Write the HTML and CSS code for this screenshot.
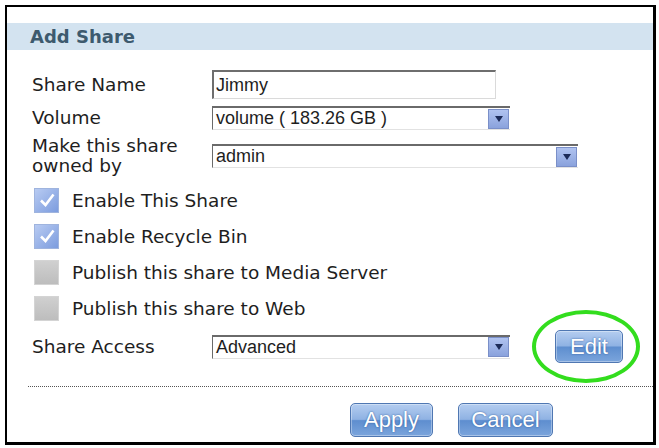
FILE: index.html
```html
<!DOCTYPE html>
<html>
<head lang="en">
    <meta charset="UTF-8">
    <title>Add Share</title>
    <link rel="stylesheet" href="styles.css">
</head>
<body>
<div class="frame">
    <div class="titlebar">Add Share</div>
    <div class="form">
        <div class="row r-name">
            <label class="lbl">Share Name</label>
            <div class="textbox">Jimmy</div>
        </div>
        <div class="row r-vol">
            <label class="lbl">Volume</label>
            <div class="combo w-mid"><span class="val">volume ( 183.26 GB )</span><span class="arrow"></span></div>
        </div>
        <div class="row r-owner">
            <label class="lbl lbl-2">Make this share<br>owned by</label>
            <div class="combo w-long"><span class="val">admin</span><span class="arrow"></span></div>
        </div>
        <div class="checks">
            <div class="check-row"><span class="box on"><svg width="20" height="20" viewBox="0 0 20 20"><path d="M4 10.5 L8.5 15 L16.5 4.5" fill="none" stroke="#fff" stroke-width="2.6"/></svg></span>Enable This Share</div>
            <div class="check-row"><span class="box on"><svg width="20" height="20" viewBox="0 0 20 20"><path d="M4 10.5 L8.5 15 L16.5 4.5" fill="none" stroke="#fff" stroke-width="2.6"/></svg></span>Enable Recycle Bin</div>
            <div class="check-row"><span class="box"></span>Publish this share to Media Server</div>
            <div class="check-row"><span class="box"></span>Publish this share to Web</div>
        </div>
        <div class="row r-access">
            <label class="lbl">Share Access</label>
            <div class="combo w-mid"><span class="val">Advanced</span><span class="arrow"></span></div>
            <div class="edit-wrap">
                <button class="btn btn-edit">Edit</button>
                <span class="mark"></span>
            </div>
        </div>
    </div>
    <div class="divider"></div>
    <div class="actions">
        <button class="btn btn-apply">Apply</button>
        <button class="btn btn-cancel">Cancel</button>
    </div>
</div>
</body>
</html>
```
FILE: styles.css
```css
*{margin:0;padding:0;box-sizing:border-box;}
body{background:#fff;font-family:"DejaVu Sans",Verdana,sans-serif;color:#1e1e1e;}
.frame{margin:5px 0 0 5px;width:651px;height:440px;border:2px solid #000;border-right-width:3px;border-bottom-width:3px;background:#fff;}
.titlebar{margin-top:16px;height:27px;line-height:27px;padding-left:23px;background:#d3e3f0;color:#3d5a6e;font-weight:bold;font-size:18px;}
.form{padding-left:25px;margin-top:20px;}
.row{display:flex;align-items:center;}
.lbl{display:block;width:180px;flex:none;font-size:18.5px;line-height:20px;}
.r-name{height:29px;}
.r-vol{height:24px;margin-top:7px;}
.r-owner{height:40px;margin-top:6px;}
.r-access{height:33px;margin-top:4px;}
.textbox{width:284px;height:29px;border-top:2px solid #6e6e6e;border-left:2px solid #6e6e6e;border-right:1px solid #dadada;border-bottom:1px solid #dadada;font-family:"Liberation Sans",Arial,sans-serif;font-size:18px;line-height:26px;padding-left:2px;}
.combo{display:flex;align-items:center;height:24px;border-top:2px solid #6a6a6a;border-left:1px solid #6a6a6a;border-bottom:1px solid #e2e2e2;font-family:"Liberation Sans",Arial,sans-serif;font-size:18px;}
.combo .val{flex:1;padding-left:3px;line-height:21px;}
.w-mid{width:298px;}
.w-long{width:366px;}
.arrow{flex:none;width:21px;height:20px;margin-right:1px;background:linear-gradient(#b0c3f0,#8aa2dc);border:1px solid #7a8fc8;display:flex;align-items:center;justify-content:center;}
.arrow:after{content:"";border-left:4px solid transparent;border-right:4px solid transparent;border-top:6px solid #1c2b58;}
.checks{margin-top:6px;}
.check-row{height:36px;display:flex;align-items:center;font-size:18.5px;padding-left:2px;}
.box{width:25px;height:25px;margin-right:13px;border:1px solid #d4d4d4;background:linear-gradient(#d0d0d0,#bdbdbd);display:flex;align-items:center;justify-content:center;}
.box.on{border-color:#9fb4de;background:linear-gradient(135deg,#b8cbf2,#7c9cde);}
.edit-wrap{position:relative;margin-left:45px;}
.btn{display:block;height:34px;border:1px solid #4f77b2;border-radius:5px;background:linear-gradient(#b4cdf0,#8fb2e3 48%,#5e8ecf 52%,#7ba5dc);color:#fff;font-family:"Liberation Sans",Arial,sans-serif;font-size:22px;text-shadow:0 0 2px #2d5a9c;box-shadow:inset 0 0 0 1px rgba(255,255,255,.35);}
.btn-edit{width:68px;height:33px;}
.mark{position:absolute;left:-23px;top:-20px;width:108px;height:73px;border:4px solid #33dd1e;border-radius:50%;}
.divider{margin:23px 0 0 21px;border-top:1px dotted #555;}
.actions{display:flex;margin-top:16px;padding-left:343px;}
.btn-apply{width:83px;}
.btn-cancel{width:95px;margin-left:25px;}
```
